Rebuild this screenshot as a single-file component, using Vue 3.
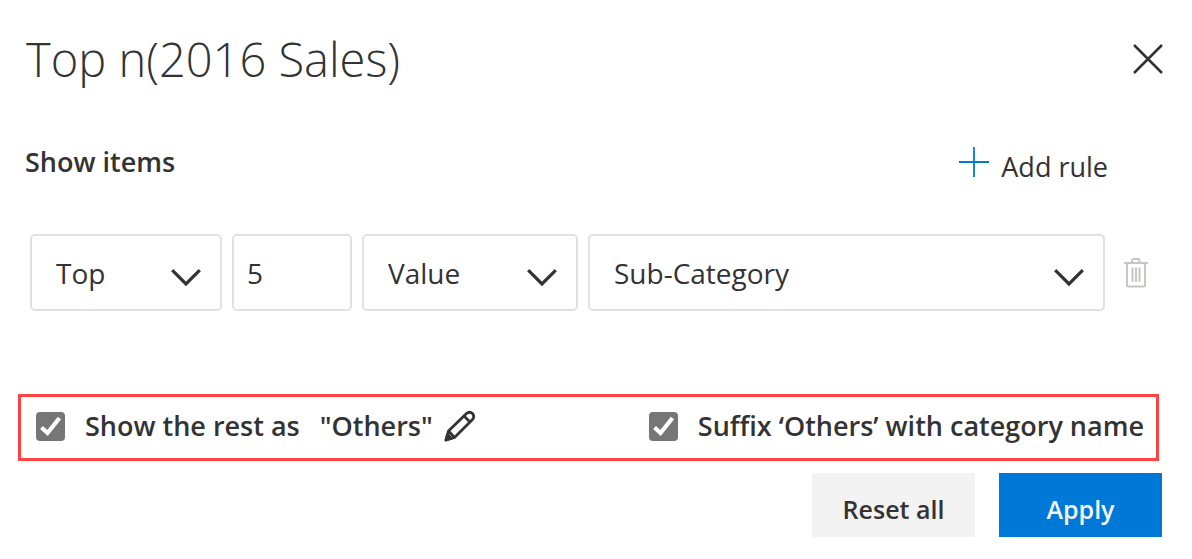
<script setup>
import { ref } from 'vue'

const direction = ref('Top')
const count = ref('5')
const basis = ref('Value')
const field = ref('Sub-Category')
const showRest = ref(true)
const suffix = ref(true)
</script>

<template>
  <main class="dialog">
    <header class="header">
      <h1 class="title">Top n(2016 Sales)</h1>
      <button class="icon-button" type="button" aria-label="Close">
        <svg width="30" height="30" viewBox="0 0 30 30" fill="none" stroke="#333" stroke-width="2.6">
          <path d="M1 1L29 29M29 1L1 29" />
        </svg>
      </button>
    </header>

    <div class="section-head">
      <h2 class="section-title">Show items</h2>
      <button class="add-rule" type="button">
        <svg width="30" height="30" viewBox="0 0 30 30" fill="none" stroke="#0078d7" stroke-width="1.8">
          <path d="M15 0V30M0 15H30" />
        </svg>
        <span>Add rule</span>
      </button>
    </div>

    <div class="rule">
      <div class="select direction">
        <select v-model="direction" class="control" aria-label="Direction">
          <option>Top</option>
          <option>Bottom</option>
        </select>
        <svg class="chevron" width="30" height="18" viewBox="0 0 30 18" fill="none" stroke="#333" stroke-width="3.2">
          <path d="M1.2 1.2L15 15L28.8 1.2" />
        </svg>
      </div>
      <input v-model="count" class="control count" type="text" aria-label="Count" />
      <div class="select basis">
        <select v-model="basis" class="control" aria-label="Basis">
          <option>Value</option>
          <option>Percent</option>
        </select>
        <svg class="chevron" width="30" height="18" viewBox="0 0 30 18" fill="none" stroke="#333" stroke-width="3.2">
          <path d="M1.2 1.2L15 15L28.8 1.2" />
        </svg>
      </div>
      <div class="select field">
        <select v-model="field" class="control" aria-label="Field">
          <option>Sub-Category</option>
          <option>Category</option>
        </select>
        <svg class="chevron" width="30" height="18" viewBox="0 0 30 18" fill="none" stroke="#333" stroke-width="3.2">
          <path d="M1.2 1.2L15 15L28.8 1.2" />
        </svg>
      </div>
      <button class="icon-button trash" type="button" aria-label="Delete rule">
        <svg width="24" height="30" viewBox="0 0 24 30" fill="none" stroke="#c8c6c4" stroke-width="2">
          <path d="M0 5H24M8 5V3Q8 1 9.500 1H14Q15.500 1 15.500 3V5M3 5V27Q3 28.500 4.500 28.500H19.500Q21 28.500 21 27V5M8.500 9.500V24M12 9.500V24M15.500 9.500V24" />
        </svg>
      </button>
    </div>

    <div class="options">
      <div class="option">
        <label class="check">
          <span class="box">
            <input v-model="showRest" type="checkbox" />
            <svg v-if="showRest" width="29" height="29" viewBox="0 0 29 29" fill="none" stroke="#fff" stroke-width="4.2">
              <path d="M5.500 15.500L11.500 21L23.500 6" />
            </svg>
          </span>
          <span>Show the rest as</span>
        </label>
        <span class="alias">"Others"</span>
        <button class="icon-button pencil" type="button" aria-label="Edit name">
          <svg width="32" height="32" viewBox="0 0 32 32" fill="none" stroke="#333" stroke-width="2.800" stroke-linejoin="round">
            <path d="M2 30L4.500 21L22.500 3.500Q25.500 1 28.500 3.500Q31 6.500 28.500 9.500L10.500 27.500ZM20 6L26 12M4.500 21L10.500 27.500" />
            <path d="M2 30L3.600 24.500L7.200 28.500Z" fill="#333" />
          </svg>
        </button>
      </div>
      <label class="check">
        <span class="box">
          <input v-model="suffix" type="checkbox" />
          <svg v-if="suffix" width="29" height="29" viewBox="0 0 29 29" fill="none" stroke="#fff" stroke-width="4.2">
            <path d="M5.500 15.500L11.500 21L23.500 6" />
          </svg>
        </span>
        <span>Suffix ‘Others’ with category name</span>
      </label>
    </div>

    <footer class="actions">
      <button class="action" type="button">Reset all</button>
      <button class="action primary" type="button">Apply</button>
    </footer>
  </main>
</template>

<style>
body {
  margin: 0;
  background: #fff;
}
</style>

<style scoped>
.dialog {
  box-sizing: border-box;
  padding: 24px 30px 22px 18px;
  color: #333;
  font-family: "Open Sans", "Noto Sans", sans-serif;
  font-size: 27px;
  line-height: 40px;
}

button {
  padding: 0;
  border: 0;
  background: none;
  color: inherit;
  font: inherit;
  cursor: pointer;
}

svg {
  display: block;
  flex: none;
}

.header {
  display: flex;
  align-items: center;
  justify-content: space-between;
  margin-right: -1px;
  padding-left: 8px;
}

.title {
  margin: 0;
  font-size: 47px;
  font-weight: 350;
  line-height: 70px;
}

.section-head {
  display: flex;
  align-items: flex-start;
  justify-content: space-between;
  margin-top: 48px;
  padding: 0 54px 0 7px;
}

.section-title {
  margin: 0;
  font-size: 27px;
  font-weight: 600;
  line-height: 40px;
}

.add-rule {
  display: flex;
  align-items: flex-start;
  gap: 12px;
  padding-top: 5px;
}

.rule {
  display: flex;
  align-items: center;
  gap: 10px;
  margin-top: 47px;
  padding: 0 14px 0 12px;
}

.select {
  position: relative;
}

.control {
  box-sizing: border-box;
  width: 100%;
  height: 77px;
  padding: 0 24px;
  border: 2px solid #e1e1e1;
  border-radius: 5px;
  background: #fff;
  color: #333;
  font: inherit;
  font-size: 28px;
  appearance: none;
}

.direction {
  width: 192px;
}

.control.count {
  width: 120px;
  padding: 0 13px;
}

.basis {
  width: 216px;
}

.field {
  flex: 1;
}

.chevron {
  position: absolute;
  top: 35px;
  right: 21px;
  pointer-events: none;
}

.trash {
  margin-left: 9px;
}

.options {
  display: flex;
  align-items: center;
  justify-content: space-between;
  margin: 83px 3px 0 0;
  padding: 0 12px 3px 15px;
  border: 3px solid #ff4343;
  font-weight: 600;
  line-height: 58px;
}

.option,
.check {
  display: flex;
  align-items: center;
}

.check {
  gap: 20px;
}

.box {
  display: grid;
}

.box input,
.box svg {
  grid-area: 1 / 1;
}

.box svg {
  pointer-events: none;
}

.box input {
  width: 29px;
  height: 29px;
  margin: 0;
  border-radius: 4px;
  background: #767676;
  appearance: none;
}

.alias {
  margin-left: 20px;
}

.pencil {
  margin-left: 11px;
}

.actions {
  display: flex;
  justify-content: flex-end;
  gap: 24px;
  margin-top: 12px;
}

.action {
  width: 163px;
  height: 64px;
  padding-top: 8px;
  background: #f3f3f3;
  font-size: 25px;
  font-weight: 600;
}

.primary {
  background: #0078d7;
  color: #f3f3f3;
}
</style>
